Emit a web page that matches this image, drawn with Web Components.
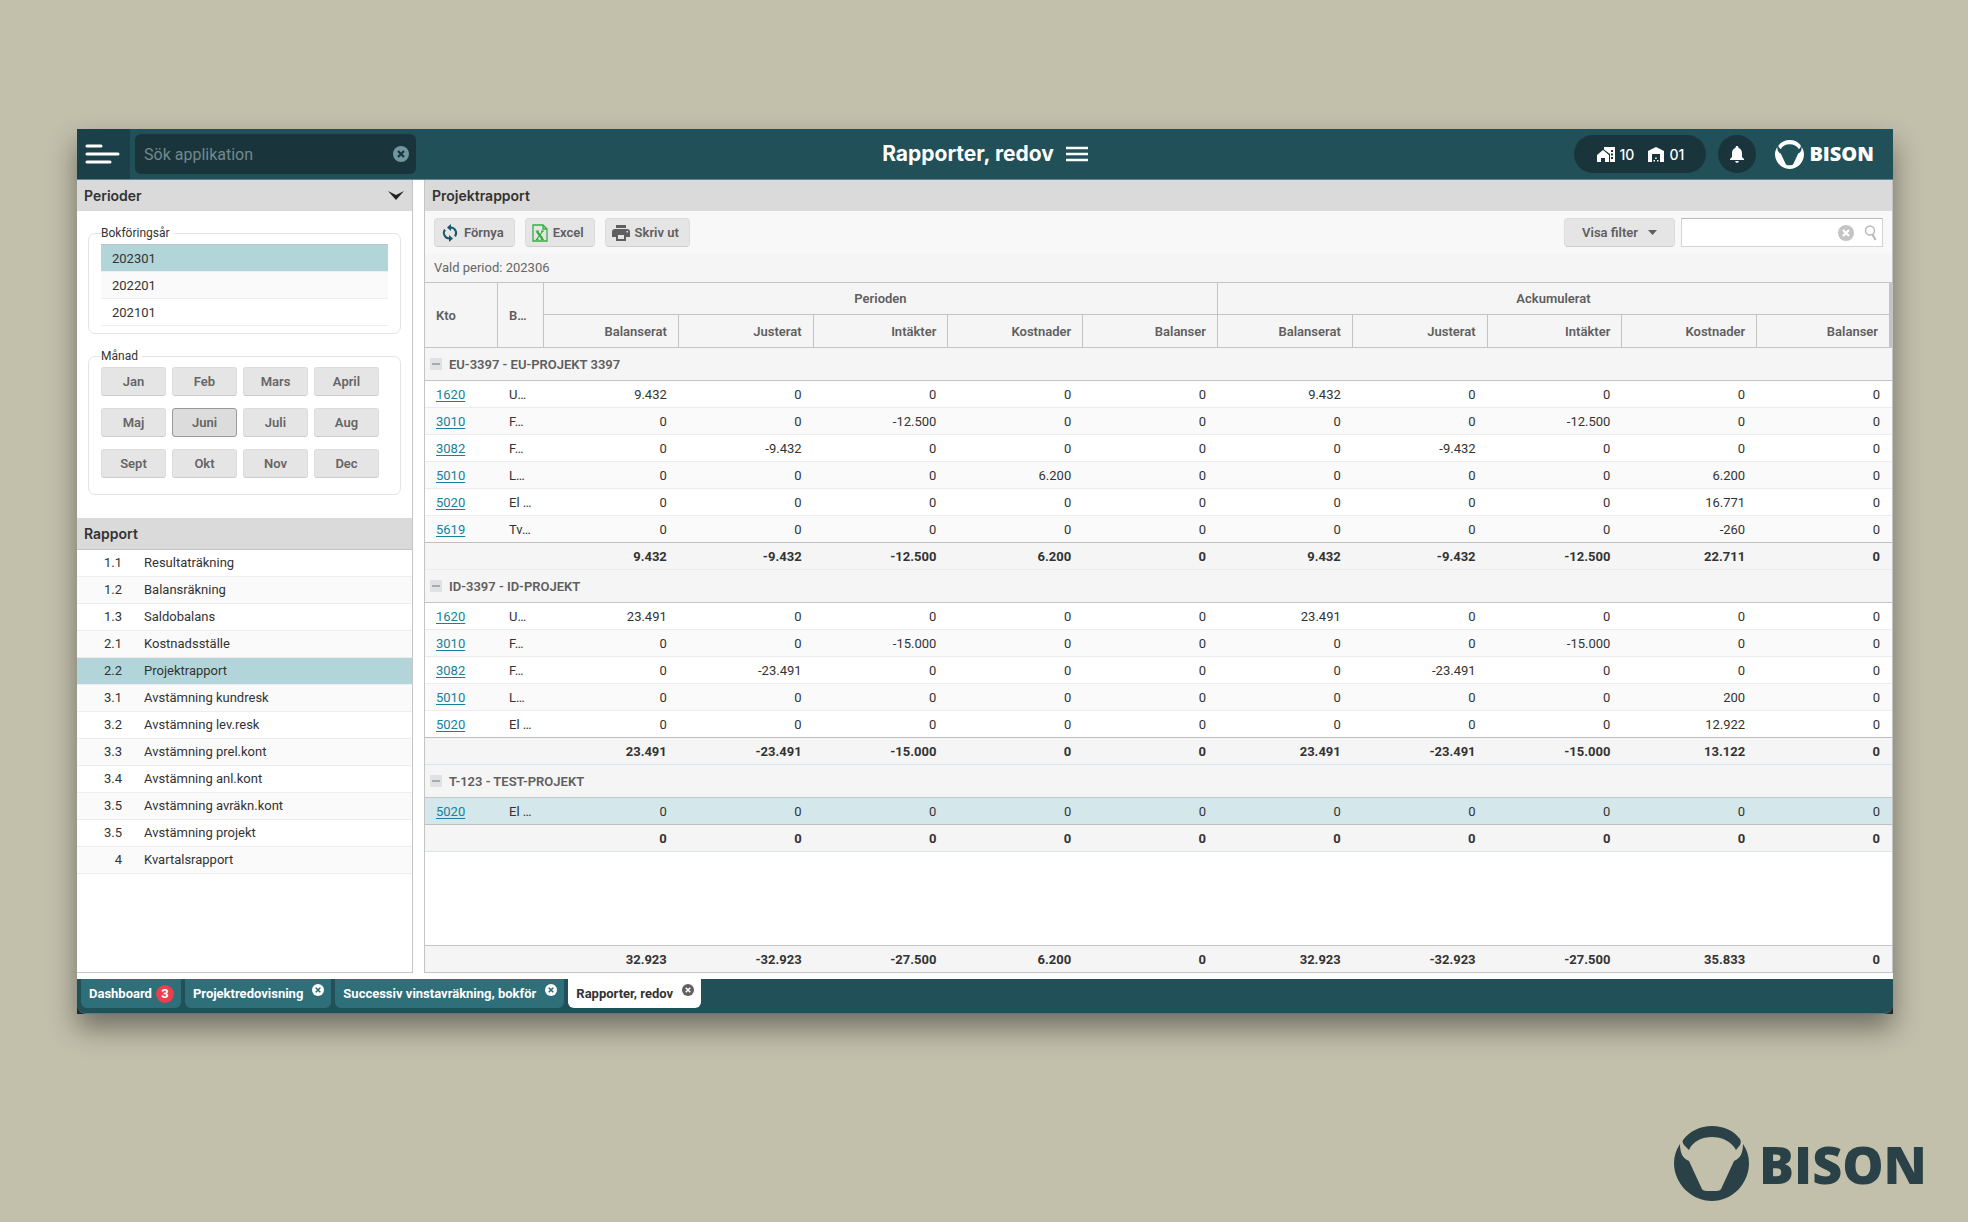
<!DOCTYPE html>
<html lang="sv">
<head>
<meta charset="utf-8">
<title>Rapporter, redov</title>
<style>
html{height:100%}
body{margin:0;min-height:100vh;display:flex;flex-direction:column;background:#c2bfab;font-family:Roboto,"Liberation Sans",sans-serif;font-size:13px;color:#333}
report-app{flex:1;margin:129px 75px 0 77px}
.brand{align-self:flex-end;margin:112px 41px 21px 0;color:#2a4247;--mark:75px;--word:52px;--gap:10px}
</style>
</head>
<body>
<report-app></report-app>
<bison-logo class="brand"></bison-logo>
<script>
const BASE = `*{box-sizing:border-box}button,input{font:inherit;color:inherit;margin:0}button{cursor:pointer}svg{display:block;flex:none}ul{list-style:none;margin:0;padding:0}`;
function element(name, render) {
  customElements.define(name, class extends HTMLElement {
    constructor() { super(); this.attachShadow({ mode: 'open' }); }
    connectedCallback() {
      const t = document.createElement('template');
      t.innerHTML = render(this);
      this.shadowRoot.replaceChildren(t.content.cloneNode(true));
    }
  });
}
const cross = (size, fill, line) => `<svg width="${size}" height="${size}" viewBox="0 0 16 16" aria-hidden="true"><circle cx="8" cy="8" r="8" fill="${fill}"/><path d="M5 5l6 6M11 5l-6 6" stroke="${line}" stroke-width="2.2"/></svg>`;

element('bison-logo', () => `<style>${BASE}
:host{display:flex;align-items:center;gap:var(--gap)}
svg{width:var(--mark);height:var(--mark)}
span{font:800 var(--word)/1 "Open Sans","Noto Sans",sans-serif}
</style>
<svg viewBox="0 0 75 75" fill="currentColor" aria-hidden="true">
<path d="M9 14C16 5 26 0 38 0s22 5 28 13c1 2 1 4 0 6l-4 5C57 15 48 11 38 11S19 15 15 24l-5-5c-1-2-2-3-1-5z"/>
<path d="M6 18c0 8 2 14 9 17l12 26c1 3 3 4 6 4h9c3 0 5-1 6-4l12-26c7-3 9-9 9-17 4 6 6 12 6 19 0 21-17 38-37 38S0 58 0 37c0-7 2-13 6-19z"/></svg>
<span>BISON</span>`);

element('app-header', () => `<style>${BASE}
:host{display:grid;grid-template-columns:1fr auto 1fr;align-items:center;height:51px;background:#215058;border-bottom:1px solid #5f878d;color:#fff;font-family:Inter,sans-serif}
.left,.right,.title,.pill,.pill span{display:flex;align-items:center}
.left{gap:5px;align-self:stretch}
.menu{width:53px;align-self:stretch;background:#1c4049;border:0;padding:0 8px}
.search{display:flex;align-items:center;width:281px;height:40px;border-radius:6px;background:#19343b;padding:0 7px 0 9px}
.search input{flex:1;min-width:0;border:0;outline:0;background:none;font:16px Roboto,sans-serif;padding:0}
.search input::placeholder{color:#72898d}
.icon{background:none;border:0;padding:0}
.title{gap:12px}
h1{margin:0;font-size:21px;line-height:24px;font-weight:700}
.right{justify-content:flex-end;gap:12px;padding-right:19px}
.pill{height:38px;width:132px;justify-content:center;gap:14px;border-radius:19px;background:#19343b;font-size:14px;font-weight:500}
.pill span{gap:5px}
.bell{width:38px;height:38px;border-radius:50%;border:0;background:#19343b;padding:0;display:grid;place-items:center}
bison-logo{margin-left:7px;--mark:29px;--word:20px;--gap:5px}
</style>
<div class="left"><button class="menu" aria-label="Meny"><svg width="36" height="20" viewBox="0 0 36 20" stroke="#fff" stroke-width="3" stroke-linecap="round"><path d="M2 2h14M2 10h31M2 18h23"/></svg></button>
<div class="search"><input type="text" aria-label="Sök applikation" placeholder="Sök applikation"><button class="icon" aria-label="Rensa">${cross(16, '#6f979d', '#19343b')}</button></div></div>
<div class="title"><h1>Rapporter, redov</h1><button class="icon" aria-label="Visa meny"><svg width="22" height="16" stroke="#fff" stroke-width="2.4"><path d="M0 2h22M0 8h22M0 14h22"/></svg></button></div>
<div class="right"><div class="pill">
<span><svg width="18" height="15" viewBox="0 0 18 15" fill="#fff"><path d="M0 8l6-5 6 5v7H8v-4H4v4H0z"/><path fill-rule="evenodd" d="M7 0h11v15h-5V7L7 2.500zM14 3v2h2V3zM14 6.500v2h2v-2zM14 10v2h2v-2z"/></svg>10</span>
<span><svg width="16" height="15" viewBox="0 0 16 15" fill="#fff"><path d="M0 4l8-4 8 4v11h-4V7H4v8H0z"/><path d="M5.500 13h1.500v1.500H5.500zM9 13h1.500v1.500H9zM7.200 10.500h1.500V12H7.200z"/></svg>01</span></div>
<button class="bell" aria-label="Aviseringar"><svg width="14" height="17" viewBox="0 0 14 17" fill="#fff"><path d="M7 0c.9 0 1.500.6 1.500 1.500v.6C11 2.800 12 4.800 12 7.200V11l2 2v1H0v-1l2-2V7.200C2 4.800 3 2.800 5.500 2.100v-.6C5.500.6 6.100 0 7 0zM5.200 15h3.600c0 1-.8 1.800-1.800 1.800S5.200 16 5.200 15z"/></svg></button>
<bison-logo></bison-logo></div>`);

element('titled-panel', el => `<style>${BASE}
:host{display:flex;flex-direction:column}
h2{display:flex;align-items:center;justify-content:space-between;flex:none;height:31px;margin:0;padding:0 8px 0 7px;background:#dadada;font:600 14px/18px Inter,sans-serif;color:#333}
</style><h2>${el.getAttribute('heading')}<slot name="action"></slot></h2><slot></slot>`);

element('period-picker', () => {
  const months = ['Jan','Feb','Mars','April','Maj','Juni','Juli','Aug','Sept','Okt','Nov','Dec'];
  return `<style>${BASE}
:host{display:flex;flex-direction:column;gap:14px;padding:14px 11px 23px}
fieldset{margin:0;min-width:0;border:1px solid #e4e4e4;border-radius:7px;padding:3px 12px 7px}
legend{padding:0 4px 0 0;font-size:12px;line-height:16px}
ul{border-top:1px solid #bfc4c5}
li{height:27px;border-bottom:1px solid #eee}
li:nth-child(even){background:#fafafa}
li button{width:100%;height:26px;border:0;background:none;text-align:left;padding:0 11px}
li.on{background:#b2d5da}
.months{display:grid;grid-template-columns:repeat(4,65px);gap:12px 6px;padding-bottom:9px}
.months button{height:29px;border:1px solid #dcdcdc;border-bottom-color:#ccc;border-radius:3px;background:#e5e5e5;font-weight:600;color:#666;padding:0}
.months .on{background:#dcdcdc;border-color:#999}
</style>
<fieldset><legend>Bokföringsår</legend><ul>${['202301','202201','202101'].map((y, i) => `<li class="${i ? '' : 'on'}"><button>${y}</button></li>`).join('')}</ul></fieldset>
<fieldset><legend>Månad</legend><div class="months">${months.map(m => `<button class="${m === 'Juni' ? 'on' : ''}" aria-pressed="${m === 'Juni'}">${m}</button>`).join('')}</div></fieldset>`;
});

element('report-list', () => {
  const rows = [['1.1','Resultaträkning'],['1.2','Balansräkning'],['1.3','Saldobalans'],['2.1','Kostnadsställe'],['2.2','Projektrapport'],['3.1','Avstämning kundresk'],['3.2','Avstämning lev.resk'],['3.3','Avstämning prel.kont'],['3.4','Avstämning anl.kont'],['3.5','Avstämning avräkn.kont'],['3.5','Avstämning projekt'],['4','Kvartalsrapport']];
  return `<style>${BASE}
:host{display:block;border-top:1px solid #c4c4c4}
li{height:27px;border-bottom:1px solid #eee}
li:nth-child(even){background:#fafafa}
li.on{background:#b2d5da}
a{display:grid;grid-template-columns:45px 1fr;gap:22px;line-height:26px;color:inherit;text-decoration:none}
a span:first-child{text-align:right}
</style><ul>${rows.map(([n, t]) => `<li class="${n === '2.2' ? 'on' : ''}"><a href="#${n}"><span>${n}</span><span>${t}</span></a></li>`).join('')}</ul>`;
});

element('tool-button', () => `<style>${BASE}
:host{display:block}
button{display:flex;align-items:center;gap:5px;height:29px;border:1px solid #dcdcdc;border-bottom-color:#d0d0d0;border-radius:4px;background:#e5e5e5;color:#5f5f5f;font-weight:600;padding:var(--pad,0 10px 0 6px)}
</style><button><slot name="icon"></slot><slot></slot><slot name="end"></slot></button>`);

element('report-toolbar', () => `<style>${BASE}
:host{display:flex;align-items:center;gap:10px;height:43px;padding:0 9px;background:#f8f8f8}
.find{display:flex;align-items:center;gap:10px;width:202px;height:29px;border:1px solid #d4d4d4;border-top-color:#b8b8b8;background:#fff;padding:0 5px;margin-left:-4px}
.find input{flex:1;min-width:0;border:0;outline:0;background:none}
.find button{border:0;background:none;padding:0}
.filter{margin-left:auto;--pad:0 17px}
.filter svg{margin-left:5px}
</style>
<tool-button><svg slot="icon" width="18" height="18" viewBox="0 0 18 18" fill="none" stroke="#16596a" stroke-width="2"><path d="M9 3.500h.5a5.500 5.500 0 0 1 4.500 8.800M9 14.500h-.5a5.500 5.500 0 0 1-4.500-8.800"/><path fill="#16596a" stroke="none" d="M10 0v7L6 3.500zM8 11v7l4-3.500z"/></svg>Förnya</tool-button>
<tool-button><svg slot="icon" width="16" height="18" viewBox="0 0 16 18" fill="none" stroke="#35ae3d" stroke-width="1.300"><path d="M1 1h10l4 4v12H1zM11 1v4h4"/><path stroke-width="2.200" d="M5 7.500l5.500 7.500"/><path stroke-width="1.200" d="M10.500 7.500L5 15M3.800 7.200h3M9 7.200h2.800M3.800 15.300h2.800M8.800 15.300h3"/></svg>Excel</tool-button>
<tool-button><svg slot="icon" width="18" height="16" viewBox="0 0 18 16" fill="#5f5f5f"><path d="M4 0h10v3H4z"/><path fill-rule="evenodd" d="M3 4h12a3 3 0 0 1 3 3v5h-4v4H4v-4H0V7a3 3 0 0 1 3-3zm3 6v4h6v-4zM14.500 6v1.500H16V6z"/></svg>Skriv ut</tool-button>
<tool-button class="filter">Visa filter<svg slot="end" width="9" height="5"><path d="M0 0h9L4.500 5z" fill="#5f5f5f"/></svg></tool-button>
<div class="find"><input type="text" aria-label="Sök i rapport"><button aria-label="Rensa">${cross(16, '#c4c4c4', '#fff')}</button><button aria-label="Sök"><svg width="13" height="16" fill="none" stroke="#bbb" stroke-width="1.500"><circle cx="6" cy="5.500" r="4.500"/><path stroke-width="2.200" d="M8.500 9.500l3 5.500"/></svg></button></div>`);

element('report-table', () => {
  const cols = '<colgroup><col class="k"><col class="b"><col span="10"></colgroup>';
  const z = '0';
  const groups = [
    ['EU-3397 - EU-PROJEKT 3397', [
      ['1620','U…','9.432',z,z,z,z,'9.432',z,z,z,z],
      ['3010','F…',z,z,'-12.500',z,z,z,z,'-12.500',z,z],
      ['3082','F…',z,'-9.432',z,z,z,z,'-9.432',z,z,z],
      ['5010','L…',z,z,z,'6.200',z,z,z,z,'6.200',z],
      ['5020','El …',z,z,z,z,z,z,z,z,'16.771',z],
      ['5619','Tv…',z,z,z,z,z,z,z,z,'-260',z]],
      ['9.432','-9.432','-12.500','6.200',z,'9.432','-9.432','-12.500','22.711',z]],
    ['ID-3397 - ID-PROJEKT', [
      ['1620','U…','23.491',z,z,z,z,'23.491',z,z,z,z],
      ['3010','F…',z,z,'-15.000',z,z,z,z,'-15.000',z,z],
      ['3082','F…',z,'-23.491',z,z,z,z,'-23.491',z,z,z],
      ['5010','L…',z,z,z,z,z,z,z,z,'200',z],
      ['5020','El …',z,z,z,z,z,z,z,z,'12.922',z]],
      ['23.491','-23.491','-15.000',z,z,'23.491','-23.491','-15.000','13.122',z]],
    ['T-123 - TEST-PROJEKT', [['5020','El …',z,z,z,z,z,z,z,z,z,z]], [z,z,z,z,z,z,z,z,z,z]]];
  const heads = ['Balanserat','Justerat','Intäkter','Kostnader','Balanser'];
  const nums = a => a.map(v => `<td class="n">${v}</td>`).join('');
  return `<style>${BASE}
:host{display:flex;flex-direction:column;justify-content:space-between;flex:1}
table{width:100%;table-layout:fixed;border-collapse:separate;border-spacing:0}
.k{width:73px}.b{width:46px}
th,td{padding:0 11px;height:27px;text-align:left;white-space:nowrap;overflow:hidden}
td{border-bottom:1px solid #ececec}
.n{text-align:right}
td.n{padding-right:12px}
thead th{background:#f5f5f5;color:#5f5f5f;font-weight:600;border-right:1px solid #c4c4c4;border-bottom:1px solid #c4c4c4;height:33px}
thead tr:first-child th{border-top:1px solid #c4c4c4}
thead th.g{text-align:center}
thead tr :last-child{border-right-width:3px}
.group th{height:33px;background:#f5f5f5;border-bottom:1px solid #c4c4c4;color:#5f5f5f;font-weight:600;padding-left:5px}
.group div{display:flex;align-items:center;gap:7px}
.group button{width:12px;height:12px;border:0;padding:0;background:#dfe1e4;display:grid;place-items:center}
.even td{background:#fafafa}
.pick td{background:#d4e7eb}
.last td{border-bottom-color:#bfbfbf}
.sum td{background:#f5f5f5;font-weight:700}
.teal td{border-bottom-color:#d4e7eb}
.foot td{border-top:1px solid #c4c4c4;border-bottom:0}
a{color:#16819a;text-underline-offset:2px}
</style>
<table>${cols}<thead><tr><th rowspan="2">Kto</th><th rowspan="2">B…</th><th colspan="5" class="g">Perioden</th><th colspan="5" class="g">Ackumulerat</th></tr>
<tr>${[...heads, ...heads].map(h => `<th class="n">${h}</th>`).join('')}</tr></thead>
${groups.map(([name, rows, sum], g) => `<tbody><tr class="group"><th colspan="12"><div><button aria-label="Fäll ihop"><svg width="8" height="2"><path d="M0 0h8v2H0z" fill="#aaa"/></svg></button>${name}</div></th></tr>
${rows.map((r, i) => `<tr class="${i % 2 ? 'even' : ''} ${g === 2 ? 'pick' : ''} ${i === rows.length - 1 ? 'last' : ''}"><td><a href="#${r[0]}">${r[0]}</a></td><td>${r[1]}</td>${nums(r.slice(2))}</tr>`).join('')}
<tr class="sum ${g ? 'teal' : ''}"><td colspan="2"></td>${nums(sum)}</tr></tbody>`).join('')}</table>
<table>${cols}<tbody><tr class="sum foot"><td></td><td></td>${nums(['32.923','-32.923','-27.500','6.200',z,'32.923','-32.923','-27.500','35.833',z])}</tr></tbody></table>`;
});

element('app-tabs', () => `<style>${BASE}
:host{display:flex;align-items:flex-start;gap:4px;height:35px;padding-left:4px;background:#215058;border-bottom:1px solid #4d8089;border-radius:0 0 9px 9px}
.tab{display:flex;gap:9px;height:29px;padding:0 7px 0 8px;border-radius:0 0 6px 6px;background:#2f6f79;color:#fff;font-weight:700}
.tab>button{border:0;background:none;padding:0;line-height:28px}
.tab .x{align-self:flex-start;padding-top:5px}
.on{background:#fff;color:#333}
.badge{display:inline-grid;place-items:center;width:18px;height:18px;margin-left:4px;border-radius:50%;background:#e8404f;line-height:18px}
</style>
<div class="tab"><button>Dashboard<span class="badge">3</span></button></div>
<div class="tab"><button>Projektredovisning</button><button class="x" aria-label="Stäng">${cross(12, '#fff', '#2f6f79')}</button></div>
<div class="tab"><button>Successiv vinstavräkning, bokför</button><button class="x" aria-label="Stäng">${cross(12, '#fff', '#2f6f79')}</button></div>
<div class="tab on"><button>Rapporter, redov</button><button class="x" aria-label="Stäng">${cross(12, '#5f5f5f', '#fff')}</button></div>`);

element('report-app', () => `<style>${BASE}
:host{display:flex;flex-direction:column;background:#262626;box-shadow:0 14px 26px rgba(0,0,0,.42)}
main{flex:1;display:grid;grid-template-columns:336px 1fr;gap:11px;background:#fff;padding-bottom:6px}
aside{border-right:1px solid #c4c4c4;border-bottom:1px solid #c4c4c4}
section{display:flex;flex-direction:column;border:solid #c4c4c4;border-width:0 1px 1px}
section titled-panel{flex:1}
p{margin:0;height:28px;line-height:28px;padding-left:9px;background:#f5f5f5;color:#666}
.fold{border:0;background:none;padding:0}
</style>
<app-header></app-header>
<main><aside>
<titled-panel heading="Perioder"><button class="fold" slot="action" aria-label="Fäll ihop"><svg width="16" height="9"><path d="M0 0l8 4 8-4-8 9z" fill="#222"/></svg></button><period-picker></period-picker></titled-panel>
<titled-panel heading="Rapport"><report-list></report-list></titled-panel></aside>
<section><titled-panel heading="Projektrapport"><report-toolbar></report-toolbar><p>Vald period: 202306</p><report-table></report-table></titled-panel></section></main>
<app-tabs></app-tabs>`);
</script>
</body>
</html>
